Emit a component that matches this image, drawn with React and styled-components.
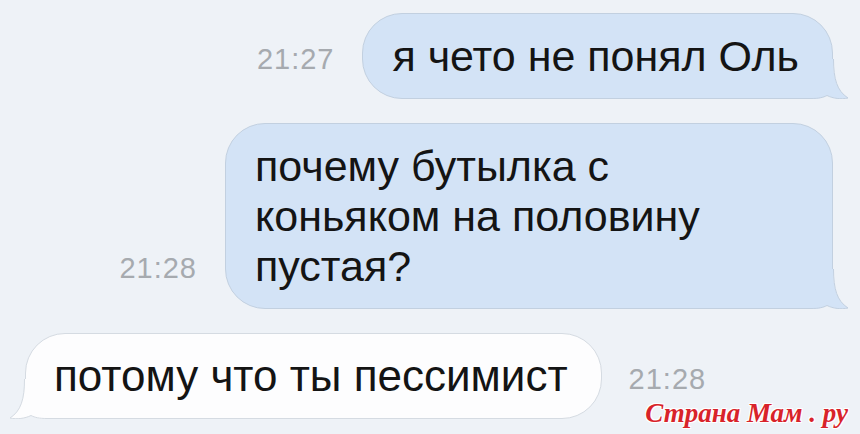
import styled, { createGlobalStyle } from "styled-components";

const Global = createGlobalStyle`
  html, body {
    margin: 0;
    padding: 0;
    background: #eef2f7;
  }
`;

const Screen = styled.div`
  position: relative;
  width: 860px;
  height: 434px;
  overflow: hidden;
  background: #eef2f7;
  font-family: "Liberation Sans", Arial, sans-serif;
  display: flex;
  flex-direction: column;
  padding-top: 13px;
  box-sizing: border-box;
`;

const Row = styled.div`
  display: flex;
  justify-content: ${(p) => (p.$out ? "flex-end" : "flex-start")};
  align-items: ${(p) => p.$align || "center"};
  gap: ${(p) => p.$gap || 28}px;
  padding: ${(p) => (p.$out ? "0 27px 0 0" : "0 0 0 25px")};
  margin-top: ${(p) => p.$top || 0}px;
`;

const Stamp = styled.div`
  font-size: 29px;
  line-height: 29px;
  color: #a6aaaf;
  letter-spacing: 1px;
  margin-top: ${(p) => p.$mt || 0}px;
  margin-bottom: ${(p) => p.$mb || 0}px;
  order: ${(p) => (p.$after ? 1 : 0)};
`;

const Bubble = styled.div`
  position: relative;
  box-sizing: border-box;
  width: ${(p) => (p.$w ? `${p.$w}px` : "auto")};
  background: ${(p) => (p.$out ? "#d3e3f6" : "#fdfdfe")};
  border: 1px solid ${(p) => (p.$out ? "#c2d0e0" : "#d5dbe2")};
  border-radius: 40px;
  padding: 17px ${(p) => p.$pr || 33}px 17px ${(p) => p.$pl || 29}px;
  color: #141414;
  font-size: ${(p) => p.$size || 43}px;
  line-height: 50px;
  white-space: pre-line;
`;

const Text = styled.span`
  position: relative;
  z-index: 1;
`;

const TailSvg = styled.svg`
  position: absolute;
  bottom: -1px;
  z-index: 0;
  ${(p) =>
    p.$left
      ? "left: -17px; transform: scaleX(-1);"
      : "right: -17px;"}
`;

const Watermark = styled.div`
  position: absolute;
  right: 12px;
  bottom: 5px;
  font-family: "Liberation Serif", "Times New Roman", serif;
  font-style: italic;
  font-weight: bold;
  font-size: 27px;
  color: #d8232a;
  text-shadow: -1px -1px 0 #fff, 1px -1px 0 #fff, -1px 1px 0 #fff,
    1px 1px 0 #fff, 0 0 2px #fff;
`;

const Tail = ({ fill, stroke, left }) => (
  <TailSvg $left={left} width="56" height="40" viewBox="0 0 56 40">
    <path
      d="M0,0 H40 C40,20 44,32 55,39 C48,40.5 40,39.5 34,36.5 C30,38.5 26,40 18,40 H0 Z"
      fill={fill}
    />
    <path
      d="M40.5,0 C40.5,20 44,32 55,39 C48,40.5 40,39.5 34,36.5 C30,38.5 26,39.5 18,39.5 H0"
      fill="none"
      stroke={stroke}
      strokeWidth="1"
    />
  </TailSvg>
);

const Message = ({ out, size, w, pr, pl, children }) => (
  <Bubble $out={out} $size={size} $w={w} $pr={pr} $pl={pl}>
    <Tail
      left={!out}
      fill={out ? "#d3e3f6" : "#fdfdfe"}
      stroke={out ? "#c2d0e0" : "#d5dbe2"}
    />
    <Text>{children}</Text>
  </Bubble>
);

export default function App() {
  return (
    <Screen>
      <Global />
      <Row $out>
        <Stamp $mt={7}>21:27</Stamp>
        <Message out>я чето не понял Оль</Message>
      </Row>
      <Row $out $align="flex-end" $top={24}>
        <Stamp $mb={26}>21:28</Stamp>
        <Message out w={608}>
          {"почему бутылка с\nконьяком на половину\nпустая?"}
        </Message>
      </Row>
      <Row $top={24} $gap={27}>
        <Stamp $after $mt={6}>21:28</Stamp>
        <Message size={44} pl={28} pr={33}>
          потому что ты пессимист
        </Message>
      </Row>
      <Watermark>Страна Мам . ру</Watermark>
    </Screen>
  );
}
